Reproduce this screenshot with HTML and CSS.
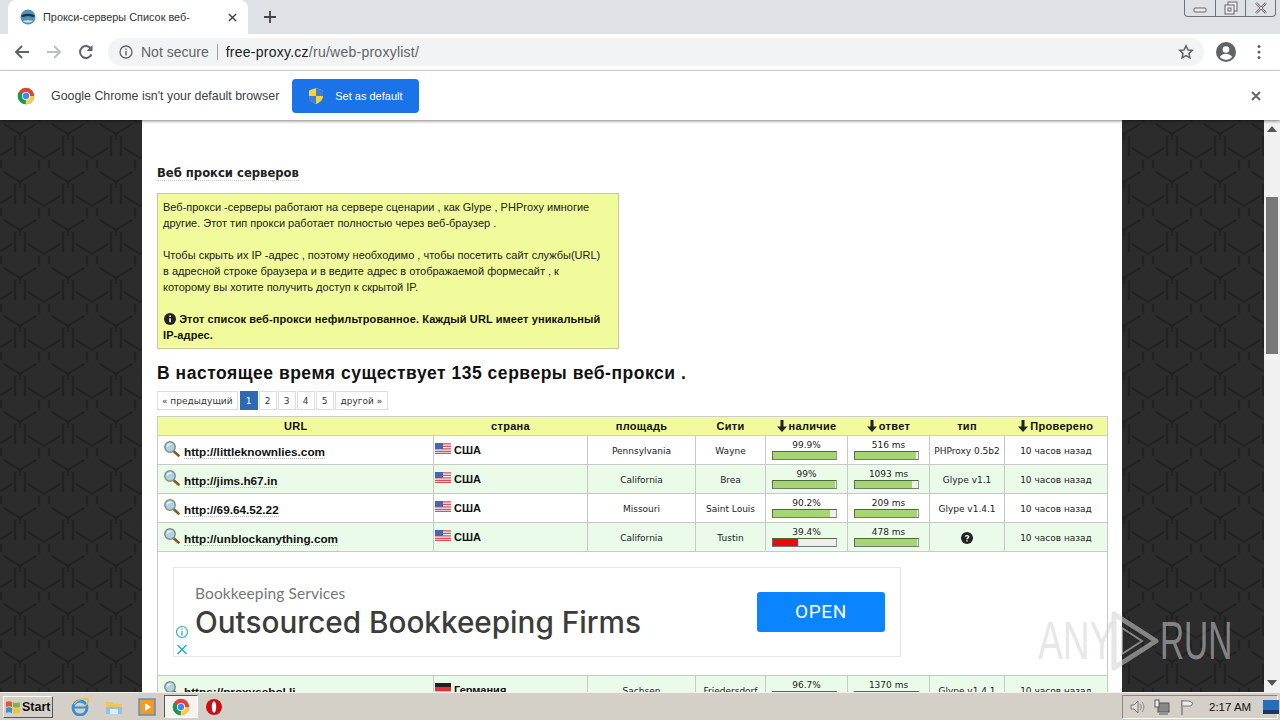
FILE: index.html
```html
<!DOCTYPE html>
<html lang="ru">
<head>
  <meta charset="UTF-8">
  <title>Прокси-серверы Список веб-</title>
  <link rel="stylesheet" href="styles.css">
</head>
<body>
  <svg class="defs" width="0" height="0" aria-hidden="true">
    <defs>
      <symbol id="chrome" viewBox="0 0 24 24">
        <circle cx="12" cy="12" r="11" fill="#db4437"/>
        <path d="M12 12 2.500 6.500A11 11 0 0 0 12 23l5-9z" fill="#0f9d58"/>
        <path d="M12 12h10.900A11 11 0 0 1 12 23l-.4-.1z" fill="#ffcd40"/>
        <circle cx="12" cy="12" r="5.400" fill="#fff"/>
        <circle cx="12" cy="12" r="4.200" fill="#4285f4"/>
      </symbol>
      <symbol id="lens" viewBox="0 0 16 16">
        <path d="M10.500 10.500 15 14.500" stroke="#8a5a1c" stroke-width="2.600" stroke-linecap="round"/>
        <circle cx="6.500" cy="6" r="5.200" fill="#a9d3e8" stroke="#8d8d7c" stroke-width="1.500"/>
        <path d="M3.500 5.500C4 3.800 6 3 8 3.400" stroke="#e8f6fc" stroke-width="1.300" fill="none"/>
      </symbol>
      <symbol id="flag-us" viewBox="0 0 16 11">
        <rect width="16" height="11" fill="#f3f3f3"/>
        <path d="M0 .8h16M0 3.300h16M0 5.800h16M0 8.300h16M0 10.400h16" stroke="#d9505a" stroke-width="1.200"/>
        <rect width="8" height="6" fill="#4a62b8"/>
      </symbol>
      <symbol id="arrow-down" viewBox="0 0 10 12">
        <path d="M3.500 0h3v6.500H10L5 12 0 6.500h3.500z" fill="#222"/>
      </symbol>
    </defs>
  </svg>

  <header class="tabstrip">
    <div class="tab">
      <svg class="tab-icon" viewBox="0 0 16 16"><circle cx="8" cy="8" r="7.500" fill="#4f94b8"/><path d="M1 7c3-3 11-3 14 0-2 2-4 0-7 0S3 9 1 7z" fill="#1d3140"/><path d="M3 12c3 2 7 2 10 0-3-1-7-1-10 0z" fill="#cfe6f0"/></svg>
      <span class="tab-title">Прокси-серверы Список веб-</span>
      <svg class="tab-close" viewBox="0 0 10 10"><path d="M1 1l8 8M9 1l-8 8" stroke="#444" stroke-width="1.600"/></svg>
    </div>
    <svg class="new-tab" viewBox="0 0 12 12"><path d="M6 0v12M0 6h12" stroke="#444" stroke-width="1.800"/></svg>
    <div class="window-buttons">
      <span class="win-btn"><svg viewBox="0 0 14 10" width="14" height="10"><rect x="1" y="5" width="12" height="4" rx="1" fill="#eee" stroke="#666"/></svg></span>
      <span class="win-btn"><svg viewBox="0 0 14 14" width="14" height="14"><rect x="4" y="1" width="9" height="9" fill="#eee" stroke="#666"/><rect x="1" y="4" width="9" height="9" fill="#eee" stroke="#666"/><rect x="4" y="7" width="3" height="3" fill="#fff" stroke="#666"/></svg></span>
      <span class="win-btn win-close"><svg viewBox="0 0 14 12" width="14" height="12"><path d="M2 1l10 10M12 1 2 11" stroke="#666" stroke-width="2.400"/><path d="M2 1l10 10M12 1 2 11" stroke="#eee" stroke-width=".9"/></svg></span>
    </div>
  </header>

  <nav class="toolbar">
    <svg class="nav-icon" viewBox="0 0 16 16"><path d="M15 8H2M8 2 2 8l6 6" fill="none" stroke="#5f6368" stroke-width="2"/></svg>
    <svg class="nav-icon" viewBox="0 0 16 16"><path d="M1 8h13M8 2l6 6-6 6" fill="none" stroke="#bcc0c4" stroke-width="2"/></svg>
    <svg class="nav-icon" viewBox="0 0 16 16"><path d="M13.500 10.500A6 6 0 1 1 13 4.600" fill="none" stroke="#5f6368" stroke-width="2"/><path d="M14.500 1v6h-6z" fill="#5f6368"/></svg>
    <div class="omnibox">
      <svg class="info-icon" viewBox="0 0 14 14"><circle cx="7" cy="7" r="6" fill="none" stroke="#5f6368" stroke-width="1.300"/><path d="M7 6v4.500M7 3.500v1.300" stroke="#5f6368" stroke-width="1.400"/></svg>
      <span class="not-secure">Not secure</span>
      <span class="omni-sep"></span>
      <span class="url"><b>free-proxy.cz</b>/ru/web-proxylist/</span>
      <svg class="star" viewBox="0 0 16 16"><path d="M8 1.800l1.900 4.100 4.400.5-3.300 3 .9 4.400L8 11.600l-3.900 2.200.9-4.400-3.300-3 4.400-.5z" fill="none" stroke="#5f6368" stroke-width="1.500"/></svg>
    </div>
    <svg class="avatar" viewBox="0 0 20 20"><circle cx="10" cy="10" r="10" fill="#5f6368"/><circle cx="10" cy="7.500" r="3.300" fill="#fff"/><path d="M3.800 15c1.500-2.500 4-3.200 6.200-3.200s4.700.7 6.200 3.200A8 8 0 0 1 10 18a8 8 0 0 1-6.200-3z" fill="#fff"/></svg>
    <svg class="menu-dots" viewBox="0 0 4 16"><circle cx="2" cy="2.500" r="1.500" fill="#5f6368"/><circle cx="2" cy="8" r="1.500" fill="#5f6368"/><circle cx="2" cy="13.500" r="1.500" fill="#5f6368"/></svg>
  </nav>

  <div class="infobar">
    <svg class="info-chrome"><use href="#chrome"/></svg>
    <span class="info-text">Google Chrome isn't your default browser</span>
    <button class="default-btn">
      <svg class="shield" viewBox="0 0 14 16"><path d="M7 0 14 2.500V8c0 4-3 6.500-7 8-4-1.500-7-4-7-8V2.500z" fill="#f5d33c"/><path d="M7 0 14 2.500V8H7zM7 8H0c0 4 3 6.500 7 8z" fill="#3f7fd0"/></svg>
      Set as default
    </button>
    <svg class="info-close" viewBox="0 0 10 10"><path d="M1 1l8 8M9 1l-8 8" stroke="#5f6368" stroke-width="1.800"/></svg>
  </div>

  <div class="viewport">
    <div class="site">
      <svg class="site-bg" width="100%" height="100%" aria-hidden="true">
        <defs>
          <pattern id="hex" width="48" height="48" patternUnits="userSpaceOnUse">
            <g fill="none" stroke="#222" stroke-width="2.500">
              <path d="M4 4 20 14 36 4M15 16v20M25 16v20M20 14v6"/>
              <path d="M-20 28-4 38 12 28M28 28 44 38 60 28M39 40v14M49 40v14M-9 40v14M1 40v14"/>
              <path d="M39-8V2M49-8V2"/>
            </g>
          </pattern>
        </defs>
        <rect width="100%" height="100%" fill="#2c2c2c"/>
        <rect width="100%" height="100%" fill="url(#hex)"/>
      </svg>

      <main class="content">
        <h3 class="section-title"><span>Веб прокси серверов</span></h3>
        <div class="note">
          Веб-прокси -серверы работают на сервере сценарии , как Glype , PHProxy имногие<br>
          другие. Этот тип прокси работает полностью через веб-браузер .<br><br>
          Чтобы скрыть их IP -адрес , поэтому необходимо , чтобы посетить сайт службы(URL)<br>
          в адресной строке браузера и в ведите адрес в отображаемой формесайт , к<br>
          которому вы хотите получить доступ к скрытой IP.<br><br>
          <b><svg class="note-icon" viewBox="0 0 12 12"><circle cx="6" cy="6" r="6" fill="#222"/><path d="M6 5.200v4M6 2.500v1.400" stroke="#fff" stroke-width="1.600"/></svg> Этот список веб-прокси нефильтрованное. Каждый URL имеет уникальный<br>IP-адрес.</b>
        </div>
        <h1 class="count-title">В настоящее время существует 135 серверы веб-прокси .</h1>
        <div class="pager">
          <a class="page page-text">« предыдущий</a>
          <a class="page current">1</a>
          <a class="page">2</a>
          <a class="page">3</a>
          <a class="page">4</a>
          <a class="page">5</a>
          <a class="page page-text">другой »</a>
        </div>

        <table class="proxies">
          <colgroup>
            <col class="c-url"><col class="c-country"><col class="c-area"><col class="c-city">
            <col class="c-bar"><col class="c-bar"><col class="c-type"><col class="c-checked">
          </colgroup>
          <thead>
            <tr>
              <th>URL</th>
              <th>страна</th>
              <th>площадь</th>
              <th>Сити</th>
              <th><svg class="sort"><use href="#arrow-down"/></svg>наличие</th>
              <th><svg class="sort"><use href="#arrow-down"/></svg>ответ</th>
              <th>тип</th>
              <th><svg class="sort"><use href="#arrow-down"/></svg>Проверено</th>
            </tr>
          </thead>
          <tbody>
            <tr>
              <td class="url-cell"><svg class="lens"><use href="#lens"/></svg><a>http://littleknownlies.com</a></td>
              <td class="country"><svg class="flag"><use href="#flag-us"/></svg><a>США</a></td>
              <td>Pennsylvania</td>
              <td>Wayne</td>
              <td class="bar-cell">99.9%<div class="bar"><i style="width:100%"></i></div></td>
              <td class="bar-cell">516 ms<div class="bar"><i style="width:97%"></i></div></td>
              <td>PHProxy 0.5b2</td>
              <td>10 часов назад</td>
            </tr>
            <tr class="alt">
              <td class="url-cell"><svg class="lens"><use href="#lens"/></svg><a>http://jims.h67.in</a></td>
              <td class="country"><svg class="flag"><use href="#flag-us"/></svg><a>США</a></td>
              <td>California</td>
              <td>Brea</td>
              <td class="bar-cell">99%<div class="bar"><i style="width:99%"></i></div></td>
              <td class="bar-cell">1093 ms<div class="bar"><i style="width:90%"></i></div></td>
              <td>Glype v1.1</td>
              <td>10 часов назад</td>
            </tr>
            <tr>
              <td class="url-cell"><svg class="lens"><use href="#lens"/></svg><a>http://69.64.52.22</a></td>
              <td class="country"><svg class="flag"><use href="#flag-us"/></svg><a>США</a></td>
              <td>Missouri</td>
              <td>Saint Louis</td>
              <td class="bar-cell">90.2%<div class="bar"><i style="width:90%"></i></div></td>
              <td class="bar-cell">209 ms<div class="bar"><i style="width:99%"></i></div></td>
              <td>Glype v1.4.1</td>
              <td>10 часов назад</td>
            </tr>
            <tr class="alt">
              <td class="url-cell"><svg class="lens"><use href="#lens"/></svg><a>http://unblockanything.com</a></td>
              <td class="country"><svg class="flag"><use href="#flag-us"/></svg><a>США</a></td>
              <td>California</td>
              <td>Tustin</td>
              <td class="bar-cell">39.4%<div class="bar"><i class="low" style="width:39.4%"></i></div></td>
              <td class="bar-cell">478 ms<div class="bar"><i style="width:98%"></i></div></td>
              <td><svg class="unknown" viewBox="0 0 12 12"><circle cx="6" cy="6" r="6" fill="#222"/><path d="M4.300 4.600C4.400 3.400 7.600 3.100 7.700 4.700 7.800 5.900 6 5.800 6 7.200M6 8.300v1.300" fill="none" stroke="#fff" stroke-width="1.400"/></svg></td>
              <td>10 часов назад</td>
            </tr>
            <tr class="ad-row">
              <td colspan="8">
                <div class="ad">
                  <div class="ad-text">
                    <div class="ad-kicker">Bookkeeping Services</div>
                    <div class="ad-title">Outsourced Bookkeeping Firms</div>
                  </div>
                  <a class="ad-open">OPEN</a>
                  <svg class="ad-choice" viewBox="0 0 14 30"><circle cx="7" cy="7" r="5.500" fill="none" stroke="#28b3c9" stroke-width="1.200"/><path d="M7 6v4.500M7 3.500v1.300" stroke="#28b3c9" stroke-width="1.300"/><path d="M2.500 20l9 9M11.500 20l-9 9" stroke="#28b3c9" stroke-width="1.600"/></svg>
                </div>
              </td>
            </tr>
            <tr class="alt">
              <td class="url-cell"><svg class="lens"><use href="#lens"/></svg><a>https://proxysebol.li</a></td>
              <td class="country"><svg class="flag" viewBox="0 0 16 11"><rect width="16" height="4" fill="#222"/><rect y="4" width="16" height="4" fill="#d33"/><rect y="8" width="16" height="3" fill="#f0c020"/></svg><a>Германия</a></td>
              <td>Sachsen</td>
              <td>Friedersdorf</td>
              <td class="bar-cell">96.7%<div class="bar"><i style="width:97%"></i></div></td>
              <td class="bar-cell">1370 ms<div class="bar"><i style="width:85%"></i></div></td>
              <td>Glype v1.4.1</td>
              <td>10 часов назад</td>
            </tr>
          </tbody>
        </table>
      </main>

      <div class="watermark">
        <span class="wm-word">ANY</span>
        <svg class="wm-play" viewBox="0 0 50 62"><path d="M4 4v54L46 31z" fill="none" stroke="currentColor" stroke-width="5" stroke-linejoin="round"/><path d="M12 18v26l20-13z" fill="none" stroke="currentColor" stroke-width="2"/></svg>
        <span class="wm-word wm-run">RUN</span>
      </div>
    </div>

    <div class="scrollbar">
      <svg class="scroll-arrow" viewBox="0 0 10 6"><path d="M5 0l5 6H0z" fill="#555"/></svg>
      <div class="scroll-track"><div class="scroll-thumb"></div></div>
      <svg class="scroll-arrow" viewBox="0 0 10 6"><path d="M0 0h10L5 6z" fill="#555"/></svg>
    </div>
  </div>

  <footer class="taskbar">
    <button class="start">
      <svg class="start-logo" viewBox="0 0 16 16"><path d="M1 3c2-1 4-1 6 0v5C5 7 3 7 1 8z" fill="#e2572b"/><path d="M8 3.300c2 1 4 1 7 0V8c-3 1-5 1-7 0z" fill="#7ab648"/><path d="M1 9c2-1 4-1 6 0v5c-2-1-4-1-6 0z" fill="#3d8fd6"/><path d="M8 9c2 1 4 1 7 0v4.500c-3 1-5 1-7 .5z" fill="#f2c230"/></svg>
      Start
    </button>
    <div class="quick">
      <span class="task"><svg viewBox="0 0 18 18"><ellipse cx="9" cy="10" rx="7" ry="7" fill="none" stroke="#3a8fd8" stroke-width="2.800"/><path d="M3 9.500h12" stroke="#3a8fd8" stroke-width="2"/><path d="M3 6C7 1 14 0 17 1c1 2-1 5-3 7" fill="none" stroke="#e9b93a" stroke-width="1.300"/></svg></span>
      <span class="task"><svg viewBox="0 0 18 18"><path d="M1 6h16v10H1z" fill="#8fc3e0"/><path d="M1 4h7l1 2h8v3H1z" fill="#e8c56a"/><path d="M5 16v-5h8v5z" fill="#d8edf6"/></svg></span>
      <span class="task"><svg viewBox="0 0 18 18"><rect x="1" y="1" width="16" height="16" fill="#f19a26" stroke="#5d8fc4" stroke-width="1.500"/><path d="M7 5v8l6-4z" fill="#fff"/></svg></span>
      <span class="task task-active"><svg><use href="#chrome"/></svg></span>
      <span class="task"><svg viewBox="0 0 18 18"><circle cx="9" cy="9" r="8" fill="#cc0f16"/><ellipse cx="9" cy="9" rx="2.200" ry="5.800" fill="#fff"/></svg></span>
    </div>
    <div class="tray">
      <svg class="tray-icon" viewBox="0 0 16 16"><path d="M2 6h3l4-4v12l-4-4H2z" fill="#ddd" stroke="#777"/><path d="M11 5c1.500 2 1.500 4 0 6M13 3c2.500 3 2.500 7 0 10" fill="none" stroke="#888"/></svg>
      <svg class="tray-icon" viewBox="0 0 16 16"><rect x="4" y="4" width="11" height="9" fill="#888" stroke="#555"/><rect x="1" y="1" width="4" height="7" fill="#eee" stroke="#555"/><path d="M5 15h9" stroke="#555"/></svg>
      <svg class="tray-icon" viewBox="0 0 16 16"><path d="M3 1v15" stroke="#777" stroke-width="1.300"/><path d="M3 2h7l4 2-2 3H3z" fill="#eee" stroke="#777"/></svg>
      <span class="clock">2:17 AM</span>
      <svg class="tray-icon show-desktop" viewBox="0 0 16 16"><rect width="16" height="14" y="1" fill="#2a6cb8"/><rect width="16" height="4" y="11" fill="#16386a"/></svg>
    </div>
  </footer>
</body>
</html>
```

FILE: styles.css
```css
* { box-sizing: border-box; }
html, body { height: 100%; }
body {
  margin: 0;
  height: 100vh;
  display: flex;
  flex-direction: column;
  overflow: hidden;
  font-family: "Liberation Sans", Arial, sans-serif;
  background: #fff;
  color: #111;
}
.defs { position: absolute; }
svg { display: block; flex: none; }

/* browser chrome */
.tabstrip {
  height: 34px;
  flex: none;
  display: flex;
  align-items: flex-end;
  background: #dee1e6;
  padding-left: 8px;
}
.tab {
  width: 240px;
  height: 34px;
  display: flex;
  align-items: center;
  padding: 0 11px 0 12px;
  background: #fff;
  border-radius: 8px 8px 0 0;
}
.tab-icon { width: 16px; height: 16px; margin-right: 7px; }
.tab-title { flex: 1; font-size: 10.9px; color: #333; white-space: nowrap; overflow: hidden; }
.tab-close { width: 9px; height: 9px; }
.new-tab { width: 12px; height: 12px; margin: 0 0 11px 16px; }
.window-buttons {
  margin-left: auto;
  align-self: flex-start;
  margin-right: 4px;
  display: flex;
  height: 17px;
  border: 1px solid #6f7377;
  border-top: 0;
  border-radius: 0 0 4px 4px;
}
.win-btn {
  width: 30px;
  display: flex;
  align-items: center;
  justify-content: center;
  border-left: 1px solid #6f7377;
}
.win-btn:first-child { border-left: 0; }

.toolbar {
  height: 37px;
  flex: none;
  display: flex;
  align-items: center;
  padding-left: 14px;
  background: #fff;
  border-bottom: 1px solid #dadce0;
}
.nav-icon { width: 16px; height: 16px; margin-right: 16px; }
.omnibox {
  width: 1096px;
  height: 28px;
  margin-left: -2px;
  display: flex;
  align-items: center;
  padding: 0 10px 0 11px;
  border-radius: 14px;
  background: #f1f3f4;
  font-size: 14px;
}
.info-icon { width: 14px; height: 14px; margin-right: 8px; }
.not-secure { color: #5f6368; }
.omni-sep { width: 1px; height: 16px; background: #9aa0a6; margin: 0 8px; }
.url { color: #5f6368; letter-spacing: 0.25px; }
.url b { font-weight: 400; color: #202124; }
.star { width: 16px; height: 16px; margin-left: auto; }
.avatar { width: 20px; height: 20px; margin-left: 12px; }
.menu-dots { width: 4px; height: 16px; margin-left: 21px; }

.infobar {
  height: 49px;
  flex: none;
  display: flex;
  align-items: center;
  padding-left: 17px;
  background: #fff;
  position: relative;
  z-index: 2;
  box-shadow: 0 1px 3px rgba(0, 0, 0, 0.5);
}
.info-chrome { width: 18px; height: 18px; margin-right: 16px; }
.info-text { font-size: 12.4px; color: #3c4043; white-space: nowrap; }
.default-btn {
  width: 127px;
  height: 34px;
  margin-left: 13px;
  display: flex;
  align-items: center;
  gap: 12px;
  padding: 0 0 0 17px;
  border: 0;
  border-radius: 4px;
  background: #1a73e8;
  color: #fff;
  font: 11px "Liberation Sans", Arial, sans-serif;
}
.shield { width: 14px; height: 16px; }
.info-close { width: 10px; height: 10px; margin-left: auto; margin-right: 19px; }

/* page */
.viewport { flex: 1; min-height: 0; display: flex; }
.site { flex: 1; position: relative; overflow: hidden; }
.site-bg { position: absolute; inset: 0; }
.content {
  position: relative;
  width: 980px;
  height: 100%;
  margin: 0 auto;
  padding: 45px 15px 0;
  background: #fff;
  overflow: hidden;
}
.section-title {
  margin: 0 0 11px;
  font: bold 11.6px/17px "DejaVu Sans", Verdana, sans-serif;
  color: #222;
}
.section-title span { border-bottom: 1px dotted #ccc; }
.note {
  width: 462px;
  height: 156px;
  padding: 5px 5px;
  background: #f1fb9b;
  border: 1px solid #c9c9a0;
  font-size: 11px;
  line-height: 16px;
  color: #222;
}
.note b { color: #111; letter-spacing: 0.1px; }
.note-icon { display: inline-block; width: 12px; height: 12px; vertical-align: -2px; margin-left: 1px; }
.count-title {
  margin: 14px 0 8px;
  font-size: 17.5px;
  line-height: 20px;
  letter-spacing: 0.52px;
  color: #111;
}
.pager { display: flex; gap: 1px; height: 19px; margin-bottom: 6px; }
.page {
  width: 18px;
  display: flex;
  align-items: center;
  justify-content: center;
  border: 1px solid #ddd;
  font: 9px "DejaVu Sans", Verdana, sans-serif;
  color: #333;
}
.page-text { width: auto; padding: 0 5px; }
.page-text:first-child { padding: 0 4px; margin-right: 1px; }
.page.current { background: #2e6ab1; border-color: #2e6ab1; color: #fff; }

.proxies {
  width: 950px;
  border-collapse: collapse;
  table-layout: fixed;
  font: 9px "DejaVu Sans", Verdana, sans-serif;
  color: #222;
}
.c-url { width: 276px; }
.c-country { width: 154px; }
.c-area { width: 108px; }
.c-city { width: 70px; }
.c-bar { width: 82px; }
.c-type { width: 75px; }
.c-checked { width: 103px; }
.proxies th {
  height: 19px;
  padding: 0;
  background: #f1fb9b;
  border: 1px solid #ccc;
  border-width: 1px 0;
  font: bold 11px "Liberation Sans", Arial, sans-serif;
  letter-spacing: 0.3px;
  color: #111;
}
.proxies th:first-child { border-left: 1px solid #ccc; }
.proxies th:last-child { border-right: 1px solid #ccc; }
.sort { display: inline-block; width: 10px; height: 12px; vertical-align: -2px; margin-right: 2px; }
.proxies td {
  height: 29px;
  padding: 2px 0 0;
  border: 1px solid #c8c8c8;
  text-align: center;
  vertical-align: middle;
  white-space: nowrap;
  overflow: hidden;
}
.alt td { background: #eafbea; }
.proxies .bar-cell { padding: 0; }
.proxies .url-cell { text-align: left; padding: 0 0 1px 5px; }
.url-cell .lens { display: inline-block; width: 17px; height: 16px; vertical-align: -1px; margin-right: 4px; }
.url-cell a {
  font: bold 11.75px "Liberation Sans", Arial, sans-serif;
  color: #111;
  border-bottom: 1px dotted #bbb;
}
.proxies .country { text-align: left; padding: 0 0 1px 1px; }
.country .flag { display: inline-block; width: 16px; height: 11px; margin-right: 3px; vertical-align: 0; }
.country a { font: bold 11px "Liberation Sans", Arial, sans-serif; color: #111; }
.bar {
  width: 65px;
  height: 9px;
  margin: 1px 0 0 6px;
  background: #eee;
  border: 1px solid #555;
  border-color: #4d6b3a #999 #777 #666;
}
.bar i { display: block; height: 100%; background: #a6d672; }
.bar i.low { background: #e80c0c; }
.unknown { width: 12px; height: 12px; margin: 0 auto; }

.proxies .ad-row td { height: 124px; background: #fff; padding: 0 15px 4px; vertical-align: middle; }
.ad {
  position: relative;
  width: 728px;
  height: 90px;
  display: flex;
  align-items: center;
  padding: 0 15px 0 21px;
  border: 1px solid #e6e6e6;
  text-align: left;
}
.ad-text { flex: 1; }
.ad-kicker { font: 15.5px/20px Lato, sans-serif; letter-spacing: 0.1px; color: #777; }
.ad-title { font: 500 29.7px/38px Inter, sans-serif; color: #3c3c3c; }
.ad-open {
  width: 128px;
  height: 40px;
  display: flex;
  align-items: center;
  justify-content: center;
  border-radius: 3px;
  background: #0a84ff;
  color: #fff;
  font: 19px Roboto, sans-serif;
  letter-spacing: 0.7px;
}
.ad-choice { position: absolute; left: 1px; bottom: 1px; width: 14px; height: 30px; }

.watermark {
  position: absolute;
  left: 1038px;
  top: 490px;
  width: 194px;
  height: 62px;
  display: flex;
  align-items: center;
  justify-content: space-between;
  color: rgba(210, 210, 210, 0.55);
}
.wm-word {
  width: 72px;
  font-size: 53px;
  line-height: 62px;
  transform: scaleX(0.7);
  transform-origin: left center;
  white-space: nowrap;
}
.wm-run { transform: scaleX(0.63); }
.wm-play { width: 50px; height: 62px; }

.scrollbar {
  width: 16px;
  flex: none;
  display: flex;
  flex-direction: column;
  background: #f1f1f1;
}
.scroll-arrow { width: 10px; height: 6px; margin: 6px 3px; }
.scroll-track { flex: 1; padding: 59px 2px 0; }
.scroll-thumb { height: 157px; background: #787878; }

/* windows taskbar */
.taskbar {
  height: 28px;
  flex: none;
  display: flex;
  align-items: center;
  padding: 0 2px 0 3px;
  background: #d4d0c8;
  border-top: 1px solid #f2f0ea;
}
.start {
  width: 50px;
  height: 22px;
  display: flex;
  align-items: center;
  gap: 1px;
  padding: 0 0 0 1px;
  background: #d4d0c8;
  border: 1px solid;
  border-color: #fff #555 #555 #fff;
  font: bold 12.5px "Liberation Sans", Arial, sans-serif;
  color: #111;
}
.start-logo { width: 16px; height: 16px; }
.quick { display: flex; align-items: center; margin-left: 10.5px; }
.task {
  width: 33.5px;
  height: 23px;
  display: flex;
  align-items: center;
  justify-content: center;
}
.task svg { width: 18px; height: 18px; }
.task-active { background: #f4f3ef; border: 1px solid; border-color: #555 #fff #fff #555; }
.tray {
  margin-left: auto;
  width: 156px;
  height: 24px;
  display: flex;
  align-items: center;
  padding-left: 6px;
  gap: 9px;
  border: 1px solid;
  border-color: #888 #fff #fff #888;
}
.tray-icon { width: 16px; height: 16px; }
.clock { font-size: 11.5px; margin-left: 5px; color: #111; white-space: nowrap; }
.show-desktop { margin-left: 3px; }
```
